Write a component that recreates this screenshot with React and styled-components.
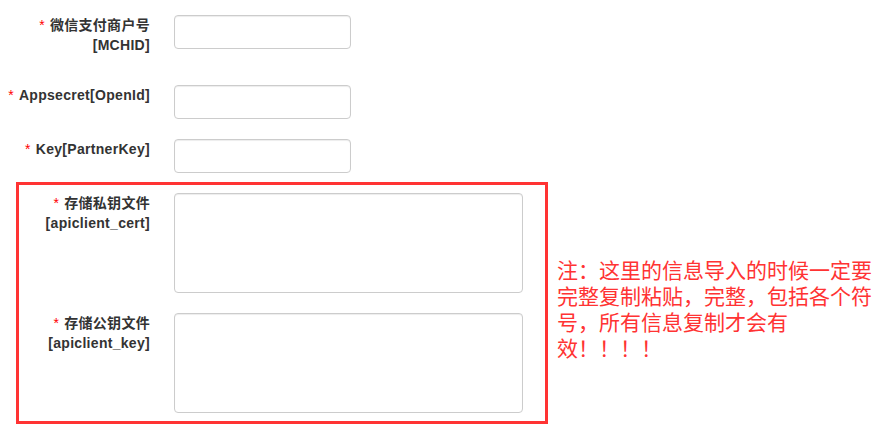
import React from "react";
import styled, { createGlobalStyle } from "styled-components";

const GlobalStyle = createGlobalStyle`
  html, body {
    margin: 0;
    padding: 0;
    background: #fff;
    overflow: hidden;
  }
  body {
    font-family: "Liberation Sans", "Noto Sans CJK SC", Arial, sans-serif;
  }
`;

/** Page wrapper */
const Page = styled.div`
  width: 873px;
  height: 429px;
  padding-top: 15px;
  box-sizing: border-box;
`;

/** One form row: label + control */
const Row = styled.div`
  display: flex;
  align-items: flex-start;
  gap: 24px;
  margin-bottom: ${({ $gap }) => $gap}px;
`;

const Label = styled.label`
  flex: 0 0 ${({ $width }) => $width}px;
  text-align: right;
  font-size: 14px;
  font-weight: bold;
  line-height: 20px;
  color: #333;
  letter-spacing: 0.3px;
  font-family: "Liberation Sans", "Noto Sans CJK SC", Arial, sans-serif;
`;

const Star = styled.span`
  color: #f00;
  font-weight: normal;
  margin-right: 5px;
`;

const Input = styled.input`
  width: 177px;
  height: 34px;
  box-sizing: border-box;
  border: 1px solid #ccc;
  border-radius: 4px;
  box-shadow: inset 0 1px 1px rgba(0, 0, 0, 0.075);
  padding: 6px 12px;
  font-size: 14px;
  margin: 0;
`;

const TextArea = styled.textarea`
  width: 349px;
  height: 100px;
  box-sizing: border-box;
  border: 1px solid #ccc;
  border-radius: 4px;
  box-shadow: inset 0 1px 1px rgba(0, 0, 0, 0.075);
  padding: 6px 12px;
  font-size: 14px;
  margin: 0;
  resize: none;
  display: block;
`;

/** Bottom area: highlighted block + note */
const Highlight = styled.div`
  display: flex;
  align-items: center;
  margin-top: 9px;
`;

const Frame = styled.div`
  flex: 0 0 auto;
  margin-left: 16px;
  width: 532px;
  box-sizing: border-box;
  border: 3px solid #f33;
  padding: 8px 22px 8px 0;
`;

const Note = styled.div`
  flex: 1;
  min-width: 0;
  margin-left: 9px;
  margin-top: 10px;
  font-size: 21px;
  line-height: 26px;
  color: #f33;
  font-family: "Noto Sans CJK SC", sans-serif;
`;

const fields = [
  { label: "微信支付商户号[MCHID]", gap: 30 },
  { label: "Appsecret[OpenId]", gap: 20 },
  { label: "Key[PartnerKey]", gap: 0 },
];

const files = [
  { label: "存储私钥文件[apiclient_cert]", gap: 20 },
  { label: "存储公钥文件[apiclient_key]", gap: 0 },
];

export default function App() {
  return (
    <>
      <GlobalStyle />
      <Page>
        {fields.map((f) => (
          <Row key={f.label} $gap={f.gap}>
            <Label $width={150}>
              <Star>*</Star>
              {f.label}
            </Label>
            <Input type="text" />
          </Row>
        ))}
        <Highlight>
          <Frame>
            {files.map((f) => (
              <Row key={f.label} $gap={f.gap}>
                <Label $width={131}>
                  <Star>*</Star>
                  {f.label}
                </Label>
                <TextArea />
              </Row>
            ))}
          </Frame>
          <Note>
            注：这里的信息导入的时候一定要完整复制粘贴，完整，包括各个符号，所有信息复制才会有效！！！！
          </Note>
        </Highlight>
      </Page>
    </>
  );
}
